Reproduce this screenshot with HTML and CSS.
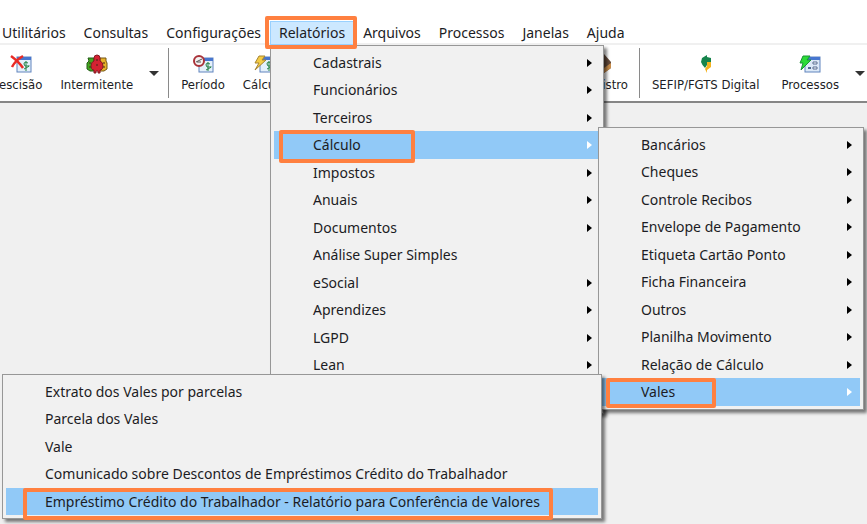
FILE: index.html
```
<!DOCTYPE html>
<html lang="pt-BR">
<head>
<meta charset="utf-8">
<title>Relatórios</title>
<link rel="stylesheet" href="styles.css">
</head>
<body>
<div class="app">
  <nav class="menubar">
    <div class="entry"><button type="button">Utilitários</button></div>
    <div class="entry"><button type="button">Consultas</button></div>
    <div class="entry"><button type="button">Configurações</button></div>
    <div class="entry entry-open marked mark-entry">
      <button type="button">Relatórios</button>
      <ul class="menu menu-main">
        <li><button type="button" class="more">Cadastrais</button></li>
        <li><button type="button" class="more">Funcionários</button></li>
        <li><button type="button" class="more">Terceiros</button></li>
        <li class="active marked mark-calc"><button type="button" class="more">Cálculo</button>
          <ul class="menu menu-calc">
            <li><button type="button" class="more">Bancários</button></li>
            <li><button type="button" class="more">Cheques</button></li>
            <li><button type="button" class="more">Controle Recibos</button></li>
            <li><button type="button" class="more">Envelope de Pagamento</button></li>
            <li><button type="button" class="more">Etiqueta Cartão Ponto</button></li>
            <li><button type="button" class="more">Ficha Financeira</button></li>
            <li><button type="button" class="more">Outros</button></li>
            <li><button type="button" class="more">Planilha Movimento</button></li>
            <li><button type="button" class="more">Relação de Cálculo</button></li>
            <li class="active marked mark-vales"><button type="button" class="more">Vales</button>
              <ul class="menu menu-vales">
                <li><button type="button">Extrato dos Vales por parcelas</button></li>
                <li><button type="button">Parcela dos Vales</button></li>
                <li><button type="button">Vale</button></li>
                <li><button type="button">Comunicado sobre Descontos de Empréstimos Crédito do Trabalhador</button></li>
                <li class="active marked mark-loan"><button type="button">Empréstimo Crédito do Trabalhador - Relatório para Conferência de Valores</button></li>
              </ul>
            </li>
          </ul>
        </li>
        <li><button type="button" class="more">Impostos</button></li>
        <li><button type="button" class="more">Anuais</button></li>
        <li><button type="button" class="more">Documentos</button></li>
        <li><button type="button">Análise Super Simples</button></li>
        <li><button type="button" class="more">eSocial</button></li>
        <li><button type="button" class="more">Aprendizes</button></li>
        <li><button type="button" class="more">LGPD</button></li>
        <li><button type="button" class="more">Lean</button></li>
      </ul>
    </div>
    <div class="entry"><button type="button">Arquivos</button></div>
    <div class="entry"><button type="button">Processos</button></div>
    <div class="entry"><button type="button">Janelas</button></div>
    <div class="entry"><button type="button">Ajuda</button></div>
  </nav>

  <div class="toolbar">
    <div class="tools tools-start">
      <button type="button" class="tool">
        <svg width="22" height="20" viewBox="0 0 22 20"><rect x="7" y="3" width="14" height="15" fill="#e4f0fb" stroke="#6084bd"/><path d="M7 3h14v3H7z" fill="#4776cf"/><path d="M18 9q-4-2-4 1t4 2-4 3M16 7v10" fill="none" stroke="#278347"/><path d="M1 2c4 3 8 6 12 12M13 2C8 5 4 9 2 13" fill="none" stroke="#e92b25" stroke-width="2.5"/></svg>
        escisão</button>
      <button type="button" class="tool">
        <svg width="22" height="20" viewBox="0 0 22 20"><path d="M2 4h6v13H4l-3-2V9l2-2z" fill="#42a51f" stroke="#235d16"/><path d="M14 4h6v3l1 2v6l-3 2h-4z" fill="#e7b32a" stroke="#755716"/><path d="M8 4q0-3 3-3t3 3v3q3 1 3 5 0 3-2 4h-1v3h-2v-2h-2v2H8v-3H7q-2-1-2-4 0-4 3-5z" fill="#d52232" stroke="#841b22"/><path d="M4 8v2M4 12v2M18 8v2M18 12v2M11 5v2M11 10v2" stroke="#472117"/></svg>
        Intermitente</button>
      <button type="button" class="drop" aria-label="Mais"></button>
      <span class="rule"></span>
      <button type="button" class="tool">
        <svg width="22" height="20" viewBox="0 0 22 20"><rect x="7" y="4" width="14" height="14" fill="#e4f0fb" stroke="#6084bd"/><path d="M7 4h14v3H7z" fill="#4776cf"/><path d="M18 10q-4-2-4 1t4 2-4 3M16 8v9" fill="none" stroke="#278347"/><circle cx="7" cy="7" r="5" fill="#f5f2f2" stroke="#a93239" stroke-width="2"/><path d="M4 8l6-3M5 8h4" stroke="#555" /></svg>
        Período</button>
      <button type="button" class="tool">
        <svg width="22" height="20" viewBox="0 0 22 20"><rect x="7" y="3" width="14" height="15" fill="#e4f0fb" stroke="#6084bd"/><path d="M7 3h14v3H7z" fill="#4776cf"/><path d="M18 9q-4-2-4 1t4 2-4 3M16 7v10" fill="none" stroke="#278347"/><path d="M6 2h6L9 6h4L2 16l4-7H2z" fill="#f4cc45" stroke="#a68432"/></svg>
        Cálculo</button>
    </div>
    <div class="tools tools-end">
      <button type="button" class="tool">
        <svg width="22" height="20" viewBox="0 0 22 20"><path d="M4 4l7-4 7 8v6l-7 5-7-6z" fill="#654b3c"/><path d="M11 14l7-5v5l-7 5z" fill="#c78c4b"/></svg>
        Registro</button>
      <span class="rule"></span>
      <button type="button" class="tool">
        <svg width="22" height="20" viewBox="0 0 22 20"><path d="M7 4l5-3v2l4 1v4h-4v3l-2 3q-3-3-4-6z" fill="#16844c"/><path d="M12 8h4v5l-4 3v3l-2-4 2-3z" fill="#f4b21f"/></svg>
        SEFIP/FGTS Digital</button>
      <button type="button" class="tool">
        <svg width="22" height="20" viewBox="0 0 22 20"><rect x="6" y="3" width="15" height="15" fill="#dce9f7" stroke="#6084bd"/><path d="M6 3h15v3H6z" fill="#4776cf"/><path d="M14 8h4v2h-4zM14 13h4v2h-4z" fill="#fff" stroke="#586e91"/><path d="M9 14h3" stroke="#526a8e" stroke-width="2"/><path d="M4 2h7L8 6h4L2 16l2-7H1z" fill="#2bdc35" stroke="#189535"/></svg>
        Processos</button>
      <button type="button" class="drop" aria-label="Mais"></button>
    </div>
  </div>
  <main class="workspace"></main>
</div>
</body>
</html>
```
FILE: styles.css
```
*, *::before, *::after { box-sizing: border-box; }

body {
  margin: 0;
  background: #f0f0f0;
  color: #1c1c24;
  font: 14px/24px "Noto Sans", "Open Sans", sans-serif;
}

button {
  margin: 0;
  padding: 0;
  border: 0;
  background: none;
  color: inherit;
  font: inherit;
  white-space: nowrap;
}

.app {
  display: flex;
  flex-direction: column;
  min-height: 100vh;
  overflow: hidden;
}

.menubar {
  display: flex;
  padding: 21px 0 0;
  margin-left: -7px;
  background: #fff;
}

.entry { position: relative; }
.entry > button { padding: 0 9px; display: block; }
.entry-open { z-index: 2; }
.entry-open > button { background: #cce8ff; box-shadow: inset 0 0 0 1px #99d1ff; }

.menu {
  position: absolute;
  margin: 0;
  padding: 3px;
  list-style: none;
  background: #f1f1f1;
  border: 1px solid #979797;
  box-shadow: 3px 3px 3px rgba(0, 0, 0, 0.5);
}

.menu-main { top: 100%; left: 0; width: 334px; padding-bottom: 34px; }
.menu-calc { top: -4px; left: calc(100% - 2px); width: 266px; }
.menu-vales { top: -4px; right: 100%; width: 600px; }

.menu li { position: relative; height: 27px; }
.menu li:nth-child(even) { height: 28px; }

.menu li > button {
  display: flex;
  align-items: center;
  justify-content: space-between;
  width: 100%;
  height: 100%;
  padding: 0 8px 0 39px;
}

.active > button { background: #91c9f7; }

.more::after {
  content: "";
  border: 4px solid transparent;
  border-left: 5px solid #000;
  border-right: 0;
}

.active > .more::after { border-left-color: #fff; }

.marked::after {
  content: "";
  position: absolute;
  border: 4px solid #ff8040;
  border-radius: 2px;
  pointer-events: none;
}

.mark-entry::after { inset: -5px -3px -4px -5px; }
.mark-calc::after { top: -1px; left: 5px; width: 136px; height: 33px; }
.mark-vales::after { top: 0; left: 4px; width: 110px; height: 30px; }
.mark-loan::after { top: 0; left: 17px; width: 530px; height: 32px; }

.toolbar {
  display: flex;
  justify-content: space-between;
  height: 60px;
  margin-top: -2px;
  background: #fff;
  border-top: 2px solid #f0f0f0;
  border-bottom: 2px solid #868686;
  font: 13px/16px "DejaVu Sans Condensed", "DejaVu Sans", sans-serif;
}

.tools { display: flex; align-items: flex-start; padding-top: 9px; }
.tools-start { margin-left: -10px; }
.tools-end { margin-right: 2px; }

.tool {
  display: flex;
  flex-direction: column;
  align-items: center;
  gap: 3px;
  padding: 0 9px;
}

.tools-end .tool { padding: 0 11px; }

.drop {
  margin: 17px 0 0 7px;
  border: 5px solid transparent;
  border-top-color: #333;
  border-bottom: 0;
}

.tools-end .drop { margin-left: 5px; }

.rule {
  width: 1px;
  height: 50px;
  margin: -6px 3px 0 9px;
  background: #8a8a8a;
}

.tools-end .rule { margin: -6px 1px 0 0; }

.workspace { flex: 1; }
```
